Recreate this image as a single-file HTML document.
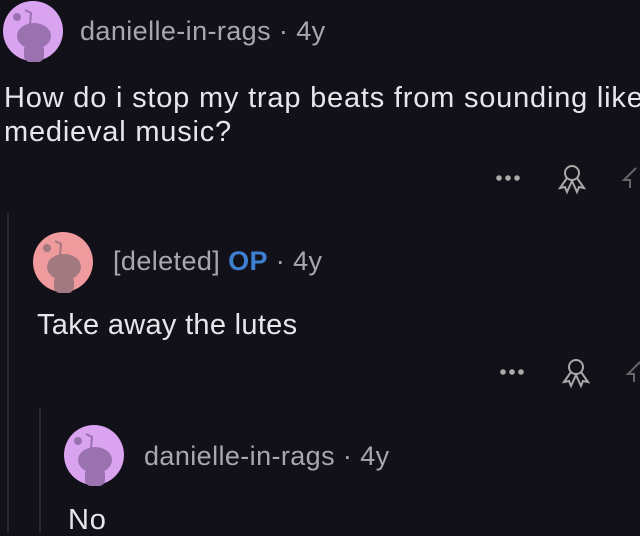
<!DOCTYPE html>
<html><head><style>
body{margin:0;width:640px;height:532px;background:#121019;overflow:hidden;position:relative;font-family:"Liberation Sans",Arial,sans-serif}
.t{position:absolute;white-space:nowrap;line-height:1}
.u{color:#a9a7ae;font-size:27px;letter-spacing:0.4px}
.b{color:#e8e6ea;font-size:29px;letter-spacing:0.8px}
svg{position:absolute}
</style></head><body>
<div style="position:absolute;left:7px;top:213px;width:2px;height:319px;background:#2a2830"></div>
<div style="position:absolute;left:39px;top:408px;width:2px;height:124px;background:#2a2830"></div>

<svg style="left:2px;top:0" width="62" height="62" viewBox="0 0 62 62"><circle cx="31" cy="31" r="30" fill="#d9a3f0"/><g fill="#9a72b0"><ellipse cx="32" cy="36" rx="17" ry="13"/><rect x="22" y="44" width="20" height="18" rx="6"/><circle cx="15" cy="17" r="4"/></g><path d="M28 24 L29 13 L23 10" stroke="#9a72b0" stroke-width="2" fill="none"/></svg>
<div class="t u" style="left:80px;top:18px">danielle-in-rags · 4y</div>
<div class="t b" style="left:4px;top:84px">How do i stop my trap beats from sounding like</div>
<div class="t b" style="left:4px;top:118px">medieval music?</div>

<svg style="left:32px;top:231px" width="62" height="62" viewBox="0 0 62 62"><circle cx="31" cy="31" r="30" fill="#ef9a9c"/><g fill="#a07a80"><ellipse cx="32" cy="36" rx="17" ry="13"/><rect x="22" y="44" width="20" height="18" rx="6"/><circle cx="15" cy="17" r="4"/></g><path d="M28 24 L29 13 L23 10" stroke="#a07a80" stroke-width="2" fill="none"/></svg>
<div class="t u" style="left:113px;top:248px">[deleted] <span style="color:#3d7fd0;font-weight:bold">OP</span> · 4y</div>
<div class="t b" style="left:37px;top:311px;letter-spacing:0.3px">Take away the lutes</div>

<svg style="left:63px;top:424px" width="62" height="62" viewBox="0 0 62 62"><circle cx="31" cy="31" r="30" fill="#d9a3f0"/><g fill="#9a72b0"><ellipse cx="32" cy="36" rx="17" ry="13"/><rect x="22" y="44" width="20" height="18" rx="6"/><circle cx="15" cy="17" r="4"/></g><path d="M28 24 L29 13 L23 10" stroke="#9a72b0" stroke-width="2" fill="none"/></svg>
<div class="t u" style="left:144px;top:443px">danielle-in-rags · 4y</div>
<div class="t b" style="left:68px;top:506px">No</div>

<svg style="left:490px;top:160px" width="150" height="40"><g fill="#aaa"><circle cx="9" cy="18" r="2.8"/><circle cx="18" cy="18" r="2.8"/><circle cx="27" cy="18" r="2.8"/></g><g stroke="#aaa" stroke-width="2" fill="none"><circle cx="82" cy="13" r="7"/><path d="M77 18 L70 28 L75 27 L77 32 L82 21 L87 32 L89 27 L94 28 L87 18"/></g><path d="M140 28 V20 H134 L146 8" stroke="#666" stroke-width="2" fill="none"/></svg>
<svg style="left:494px;top:354px" width="150" height="40"><g fill="#aaa"><circle cx="9" cy="18" r="2.8"/><circle cx="18" cy="18" r="2.8"/><circle cx="27" cy="18" r="2.8"/></g><g stroke="#aaa" stroke-width="2" fill="none"><circle cx="82" cy="13" r="7"/><path d="M77 18 L70 28 L75 27 L77 32 L82 21 L87 32 L89 27 L94 28 L87 18"/></g><path d="M140 28 V20 H134 L146 8" stroke="#666" stroke-width="2" fill="none"/></svg>
</body></html>
